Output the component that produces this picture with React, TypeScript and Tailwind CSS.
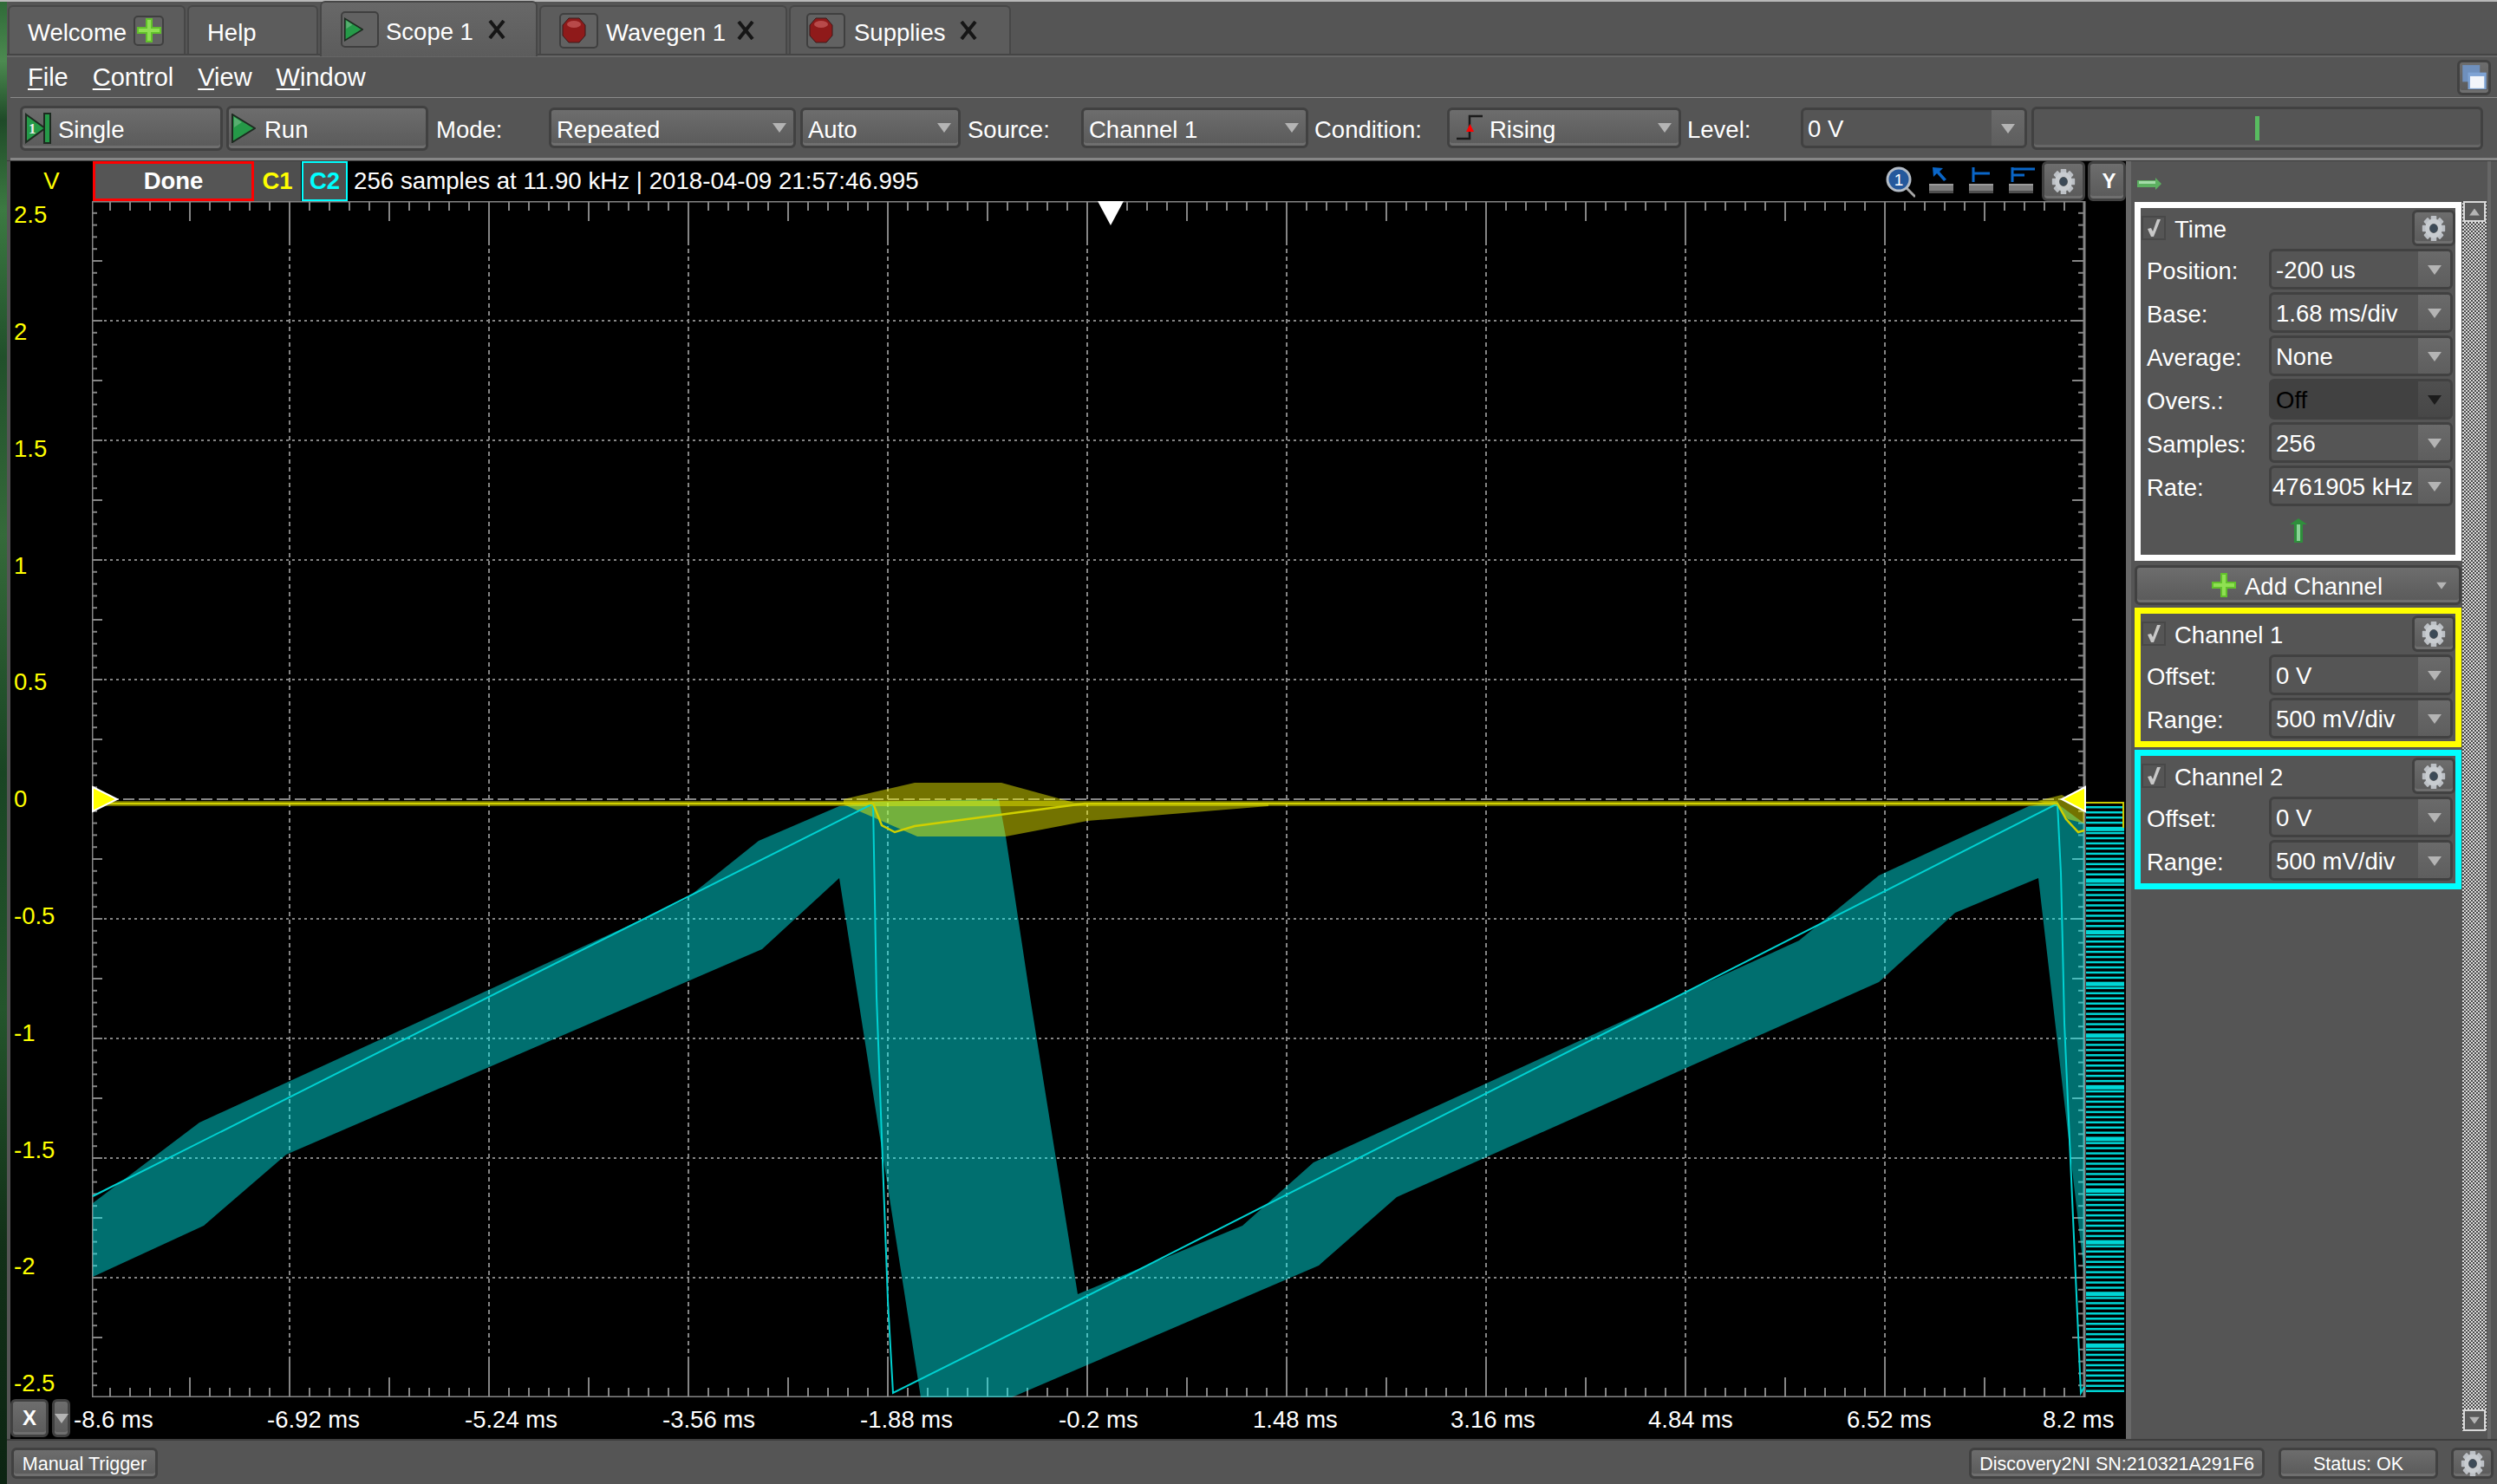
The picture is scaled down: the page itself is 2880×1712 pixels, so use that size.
import type { ReactNode } from "react";

// --- Shared styles ---
const raised =
  "rounded-[6px] border-[3px] border-[#414141] bg-linear-to-b from-[#6d6d6d] to-[#5a5a5a] shadow-[inset_0_-3px_0_#6f6f6f]";

// --- Small icons ---
const Arrow = ({ dark = false }: { dark?: boolean }) => (
  <svg width="16" height="11" viewBox="0 0 16 11" className="shrink-0">
    <polygon points="0,0 16,0 8,11" fill={dark ? "#1c1c1c" : "#b4b4b4"} />
  </svg>
);

const Gear = () => (
  <svg width="28" height="31" viewBox="0 0 34 34" preserveAspectRatio="none">
    {[0, 45, 90, 135, 180, 225, 270, 315].map((a) => (
      <rect key={a} x="13" y="1" width="8" height="9" rx="1" fill="#bcc0c5" transform={`rotate(${a} 17 17)`} />
    ))}
    <circle cx="17" cy="17" r="9" fill="none" stroke="#c8ccd0" strokeWidth="6" />
    <circle cx="17" cy="17" r="5.5" fill="#3c4a57" />
  </svg>
);

const Play = ({ w = 28, h = 34 }: { w?: number; h?: number }) => (
  <svg width={w} height={h} viewBox="0 0 28 34" className="shrink-0">
    <polygon points="1,1 27,17 1,33" fill="#259a48" stroke="#1d2a20" strokeWidth="2" />
    <polygon points="3,4 12,10 3,16" fill="#7bbd8c" opacity="0.6" />
  </svg>
);

const Stop = () => (
  <svg width="30" height="30" viewBox="0 0 30 30">
    <polygon points="9,1 21,1 28,9 28,21 21,29 9,29 2,21 2,9" fill="#8f1a1a" stroke="#3a1a1a" strokeWidth="1" />
    <ellipse cx="15" cy="8" rx="8" ry="4" fill="#c96060" opacity="0.7" />
  </svg>
);

const Close = () => (
  <svg width="24" height="22" viewBox="0 0 24 22" className="shrink-0">
    <path d="M4 1 L20 21 M20 1 L4 21" stroke="#161616" strokeWidth="4" />
  </svg>
);

const Plus = ({ size = 28 }: { size?: number }) => (
  <svg width={size} height={size} viewBox="0 0 28 28" className="shrink-0">
    <path d="M10 0 H18 V10 H28 V18 H18 V28 H10 V18 H0 V10 H10 Z" fill="#62c02c" />
    <path d="M12 2 H16 V12 H26 V16 H16 V26 H12 V16 H2 V12 H12 Z" fill="#8fe052" />
  </svg>
);

const Check = () => (
  <svg width="16" height="22" viewBox="0 0 16 22">
    <polygon points="1,12 5,11 7,15 12,1 16,1 8,21 5,21" fill="#c8c8c8" />
  </svg>
);

const SingleIcon = () => (
  <svg width="30" height="36" viewBox="0 0 30 36" className="shrink-0">
    <polygon points="1,2 23,18 1,34" fill="#259a48" stroke="#1d2a20" strokeWidth="2" />
    <rect x="22" y="1" width="7" height="34" fill="#259a48" stroke="#1d2a20" strokeWidth="2" />
    <text x="4" y="24" fontSize="17" fontWeight="700" fill="#eee" fontFamily="Liberation Serif, serif">1</text>
  </svg>
);

const RisingIcon = () => (
  <svg width="34" height="36" viewBox="0 0 34 36" className="shrink-0">
    <path d="M2 30 H17 V4 H32" fill="none" stroke="#1b1b1b" strokeWidth="2.5" />
    <polygon points="17.5,13 22,22 13,22" fill="#ff0000" />
  </svg>
);

const GreenArrowUp = () => (
  <svg width="20" height="28" viewBox="0 0 20 28">
    <polygon points="10,0 20,7 15,7 15,28 5,28 5,7 0,7" fill="#2f8f3c" />
    <rect x="8" y="7" width="4" height="19" fill="#8ad496" />
  </svg>
);

const GreenArrowRight = () => (
  <svg width="28" height="14" viewBox="0 0 28 14">
    <polygon points="0,3 21,3 21,0 28,7 21,14 21,11 0,11" fill="#5cb060" />
    <rect x="2" y="4" width="19" height="3" fill="#a4dca8" />
  </svg>
);

const Magnifier = () => (
  <svg width="44" height="40" viewBox="0 0 44 40" className="shrink-0">
    <line x1="34" y1="28" x2="44" y2="38" stroke="#a6a6a6" strokeWidth="3" />
    <circle cx="25" cy="18" r="13" fill="#24589c" stroke="#b4bcc6" strokeWidth="3" />
    <text x="25" y="25" textAnchor="middle" fontSize="19" fill="#fff" fontFamily="Liberation Sans, sans-serif">1</text>
  </svg>
);

const AlignIcon = ({ kind }: { kind: "arrow" | "one" | "two" }) => (
  <svg width="30" height="36" viewBox="0 0 30 36" className="shrink-0">
    {kind === "arrow" && <path d="M4 2 L5 13 L9 9 L17 18 L20 16 L12 7 L16 3 Z" fill="#0a66c8" />}
    {kind === "one" && <path d="M5 2 V19 M5 9 H24" stroke="#0a66c8" strokeWidth="3" fill="none" />}
    {kind === "two" && <path d="M4 2 V19 M4 4 H30 M4 11 H18" stroke="#0a66c8" strokeWidth="3" fill="none" />}
    <rect x="0" y="21" width="28" height="11" fill="#7c7c7c" />
    <rect x="0" y="21" width="28" height="2" fill="#9a9a9a" />
    <rect x="0" y="29" width="28" height="3" fill="#4e4e4e" />
  </svg>
);

const WindowIcon = () => (
  <svg width="30" height="30" viewBox="0 0 24 28" preserveAspectRatio="none">
    <rect x="1" y="1" width="16" height="18" fill="#6f90bd" />
    <rect x="6" y="9" width="17" height="18" fill="#7ea3d4" />
    <rect x="8" y="13" width="13" height="13" fill="#f2f5fa" />
  </svg>
);

// --- Toolbar widgets ---
const Combo = ({ width, icon, children }: { width: string; icon?: ReactNode; children: ReactNode }) => (
  <div className={`${width} ${raised} h-[47px] flex items-center pl-[6px] pr-[8px] shrink-0`}>
    {icon}
    <span className="flex-1 whitespace-nowrap translate-y-[2px]">{children}</span>
    <Arrow />
  </div>
);

const Field = ({ text, disabled = false, tight = false }: { text: string; disabled?: boolean; tight?: boolean }) => (
  <div
    className={`w-[212px] h-[47px] rounded-[6px] border-[3px] border-[#414141] flex items-stretch overflow-hidden ${
      disabled ? "bg-[#414141] text-black" : "bg-[#555555]"
    }`}
  >
    <span className={`w-[169px] whitespace-nowrap leading-[43px] ${tight ? "pl-[1px]" : "pl-[5px]"}`}>{text}</span>
    <span
      className={`flex-1 flex items-center justify-center pt-[2px] bg-linear-to-b ${
        disabled ? "from-[#4f4f4f] to-[#474747]" : "from-[#6a6a6a] to-[#5e5e5e]"
      }`}
    >
      <Arrow dark={disabled} />
    </span>
  </div>
);

const Section = ({
  border,
  title,
  rows,
  children,
}: {
  border: string;
  title: string;
  rows: { label: string; value: string; disabled?: boolean; tight?: boolean }[];
  children?: ReactNode;
}) => (
  <div className={`w-[377px] border-[7px] ${border} bg-[#555555] pt-[2px] flex flex-col`}>
    <div className="h-[42px] flex items-center">
      <div className="ml-[1px] w-[28px] h-[28px] border-[2px] border-[#484848] flex items-center justify-center">
        <Check />
      </div>
      <span className="ml-[10px] flex-1 translate-y-[2px]">{title}</span>
      <div className={`${raised} w-[50px] h-[42px] flex items-center justify-center`}>
        <Gear />
      </div>
    </div>
    <div className="mt-[3px] flex flex-col gap-[3px] pr-[3px]">
      {rows.map((r) => (
        <div key={r.label} className="flex items-center justify-between pl-[7px]">
          <span className="translate-y-[2px]">{r.label}</span>
          <Field text={r.value} disabled={r.disabled} tight={r.tight} />
        </div>
      ))}
    </div>
    {children ?? <div className="h-[3px]" />}
  </div>
);

// --- Scope chart ---
const GRID = "#858585";
const xs = [334, 564, 794, 1024, 1254, 1484, 1714, 1944, 2174];
const ys = [370, 508, 646, 784, 922, 1060, 1198, 1336, 1474];

const ticksX = Array.from({ length: 100 }, (_, i) => 104 + 23 * i).filter((x) => x > 110 && x < 2402);
const ticksY = Array.from({ length: 100 }, (_, i) => 232 + 13.8 * i).filter((y) => y > 236 && y < 1608);
const bars = Array.from({ length: 114 }, (_, i) => i);

const ScopeChart = () => (
  <svg width="2346" height="1380" viewBox="106 232 2346 1380" className="block shrink-0">
    {/* grid */}
    {xs.map((x) => (
      <g key={x} stroke={GRID} strokeWidth="2">
        <line x1={x} y1={278} x2={x} y2={1566} strokeDasharray="5 4" />
        <line x1={x} y1={232} x2={x} y2={278} />
        <line x1={x} y1={1566} x2={x} y2={1612} />
      </g>
    ))}
    {ys.map((y) => (
      <line key={y} x1={106} y1={y} x2={2404} y2={y} stroke={GRID} strokeWidth="2" strokeDasharray={y === 922 ? "13 5" : "3 4"} />
    ))}
    {ticksX.map((x, i) => {
      const mid = (x - 104) % 115 === 0;
      return (
        <g key={i} stroke={GRID} strokeWidth="2">
          <line x1={x} y1={232} x2={x} y2={mid ? 255 : 243} />
          <line x1={x} y1={1612} x2={x} y2={mid ? 1589 : 1601} />
        </g>
      );
    })}
    {ticksY.map((y, i) => {
      const mid = (i + 1) % 5 === 0;
      return (
        <g key={i} stroke={GRID} strokeWidth="2">
          <line x1={106} y1={y} x2={mid ? 118 : 112} y2={y} />
          <line x1={2404} y1={y} x2={mid ? 2390 : 2397} y2={y} />
        </g>
      );
    })}
    <path d="M106 1612 V232 H2404 V1612 Z" fill="none" stroke={GRID} strokeWidth="3" />

    {/* channel 2 band */}
    <polygon
      fill="#00ffff"
      fillOpacity="0.435"
      points="107,1388 230,1295 790,1038 875,970 968,930 1007,925 1152,922 1160,965 1188,1150 1243,1493 1433,1414 1515,1341 2075,1085 2167,1010 2340,930 2370,925 2404,950 2404,1470 2351,1013 2255,1053 2167,1133 1611,1381 1521,1460 1167,1612 1062,1612 968,1013 879,1095 330,1332 235,1414 107,1473"
    />
    {/* channel 1 band */}
    <polygon
      fill="#ffff00"
      fillOpacity="0.45"
      points="973,922 1055,903 1155,903 1239,926 1463,927 1463,930 1254,947 1160,965 1058,965 973,928"
    />
    <polygon fill="#ffff00" fillOpacity="0.45" points="2350,924 2378,917 2404,930 2404,950 2385,945 2372,930" />
    <line x1="107" y1="927" x2="2373" y2="927" stroke="#ffff00" strokeOpacity="0.4" strokeWidth="6" />

    {/* traces */}
    <polyline
      fill="none"
      stroke="#00d2d2"
      strokeWidth="2"
      points="107,1380 1007,927 1011,1150 1024,1500 1030,1607 1244,1500 2373,927 2377,1007 2379,1090 2381,1180 2400,1607 2404,1600"
    />
    <polyline
      fill="none"
      stroke="#d0d000"
      strokeWidth="2.5"
      points="107,927 1007,927 1017,952 1032,960 1055,953 1251,927 2373,927 2383,945 2397,960 2404,958"
    />

    {/* right edge overflow bars */}
    {bars.map((i) => (
      <rect key={i} x={2406} y={930 + i * 5.96} width={44} height={i % 10 === 4 ? 5 : 2.5} fill="#00d6d6" />
    ))}
    <polyline points="2406,926 2449,926 2449,955" fill="none" stroke="#c8c800" strokeWidth="2" />

    {/* markers */}
    <polygon points="107,908 135,922 107,936" fill="#ffff00" stroke="#fff" strokeWidth="2" />
    <polygon points="2405,908 2378,922 2405,936" fill="#ffff00" stroke="#fff" strokeWidth="2" />
    <polygon points="1266,232 1296,232 1281,260" fill="#fff" />
  </svg>
);

const yLabels = ["2.5", "2", "1.5", "1", "0.5", "0", "-0.5", "-1", "-1.5", "-2", "-2.5"];
const xLabels = ["-8.6 ms", "-6.92 ms", "-5.24 ms", "-3.56 ms", "-1.88 ms", "-0.2 ms", "1.48 ms", "3.16 ms", "4.84 ms", "6.52 ms", "8.2 ms"];

// --- Main ---
export default function App() {
  return (
    <div className="w-[2880px] h-[1712px] overflow-hidden flex flex-col bg-[#555555] text-white text-[27.5px] leading-none font-['Liberation_Sans',Arial,sans-serif]">
      <div className="h-[2px] bg-[#b8b8b8] shrink-0" />
      <div className="flex-1 flex min-h-0">
        {/* desktop sliver behind the window */}
        <div className="w-[8px] shrink-0 bg-[linear-gradient(180deg,#2f6a38_0%,#4c8a50_4%,#1f4a28_8%,#3c7a42_14%,#21502b_24%,#356a3a_36%,#1a4524_52%,#24552c_68%,#123018_84%,#0c2412_100%)]" />

        <div className="flex-1 flex flex-col min-w-0">
          {/* Tabs */}
          <div className="h-[62px] shrink-0 flex items-end pl-[1px] gap-[2px] border-b-[2px] border-[#454545]">
            <div className="w-[205px] h-[56px] rounded-t-[6px] border-[2px] border-b-0 border-[#474747] bg-[#5c5c5c] flex items-center pl-[21px]">
              <span className="translate-y-[3px]">Welcome</span>
              <span className="ml-[8px] w-[35px] h-[35px] rounded-[5px] border-[2px] border-[#3f3f3f] bg-[#626262] flex items-center justify-center">
                <Plus />
              </span>
            </div>
            <div className="w-[151px] h-[56px] rounded-t-[6px] border-[2px] border-b-0 border-[#474747] bg-[#5c5c5c] flex items-center pl-[21px]">
              <span className="translate-y-[3px]">Help</span>
            </div>
            <div className="w-[251px] h-[64px] mb-[-3px] z-10 rounded-t-[6px] border-[2px] border-b-0 border-[#474747] bg-linear-to-b from-[#686868] to-[#5c5c5c] flex items-center pl-[22px]">
              <span className="w-[44px] h-[42px] rounded-[5px] border-[2px] border-[#3f3f3f] bg-[#626262] flex items-center pl-[2px]">
                <Play w={22} h={28} />
              </span>
              <span className="ml-[8px] translate-y-[3px]">Scope 1</span>
              <span className="ml-[15px]">
                <Close />
              </span>
            </div>
            <div className="w-[286px] h-[56px] rounded-t-[6px] border-[2px] border-b-0 border-[#474747] bg-[#5c5c5c] flex items-center pl-[21px]">
              <span className="w-[45px] h-[41px] rounded-[5px] border-[2px] border-[#3f3f3f] bg-[#626262] flex items-center">
                <Stop />
              </span>
              <span className="ml-[9px] translate-y-[3px]">Wavegen 1</span>
              <span className="ml-[11px]">
                <Close />
              </span>
            </div>
            <div className="w-[256px] h-[56px] rounded-t-[6px] border-[2px] border-b-0 border-[#474747] bg-[#5c5c5c] flex items-center pl-[18px]">
              <span className="w-[45px] h-[41px] rounded-[5px] border-[2px] border-[#3f3f3f] bg-[#626262] flex items-center">
                <Stop />
              </span>
              <span className="ml-[10px] translate-y-[3px]">Supplies</span>
              <span className="ml-[14px]">
                <Close />
              </span>
            </div>
          </div>

          {/* Menu */}
          <div className="h-[48px] shrink-0 flex items-center pl-[24px] pr-[7px] gap-[28px] text-[29px] border-t-[2px] border-[#666666]">
            <span>
              <span className="underline underline-offset-[3px]">F</span>ile
            </span>
            <span>
              <span className="underline underline-offset-[3px]">C</span>ontrol
            </span>
            <span>
              <span className="underline underline-offset-[3px]">V</span>iew
            </span>
            <span>
              <span className="underline underline-offset-[3px]">W</span>indow
            </span>
            <div className={`ml-auto w-[39px] h-[41px] ${raised} flex items-center justify-center`}>
              <WindowIcon />
            </div>
          </div>

          {/* Toolbar */}
          <div className="h-[73px] shrink-0 ml-[4px] border-t border-[#8a8a8a] border-b-[3px] border-b-[#868686] flex items-center pl-[11px]">
            <div className={`w-[234px] h-[52px] ${raised} flex items-center pl-[3px] gap-[8px] shrink-0`}>
              <SingleIcon />
              <span className="translate-y-[2px]">Single</span>
            </div>
            <div className={`ml-[4px] w-[233px] h-[52px] ${raised} flex items-center pl-[3px] gap-[10px] shrink-0`}>
              <Play />
              <span className="translate-y-[2px]">Run</span>
            </div>
            <span className="ml-[9px] w-[130px] shrink-0 translate-y-[2px]">Mode:</span>
            <Combo width="w-[285px]">Repeated</Combo>
            <span className="w-[5px] shrink-0" />
            <Combo width="w-[185px]">Auto</Combo>
            <span className="ml-[8px] w-[131px] shrink-0 translate-y-[2px]">Source:</span>
            <Combo width="w-[262px]">Channel 1</Combo>
            <span className="ml-[7px] w-[153px] shrink-0 translate-y-[2px]">Condition:</span>
            <Combo width="w-[270px]" icon={<RisingIcon />}>
              <span className="ml-[6px]">Rising</span>
            </Combo>
            <span className="ml-[7px] w-[131px] shrink-0 translate-y-[2px]">Level:</span>
            <div className="w-[261px] h-[47px] shrink-0 rounded-[6px] border-[3px] border-[#414141] bg-[#555555] flex items-stretch overflow-hidden">
              <span className="flex-1 pl-[5px] leading-[43px]">0 V</span>
              <span className="w-[38px] flex items-center justify-center pt-[2px] bg-linear-to-b from-[#6a6a6a] to-[#5e5e5e]">
                <Arrow />
              </span>
            </div>
            <div className="ml-[5px] w-[521px] h-[50px] shrink-0 rounded-[6px] border-[3px] border-[#414141] bg-[#555555] shadow-[inset_0_-3px_0_#666666] flex items-center justify-center">
              <span className="w-[5px] h-[28px] bg-[#58bc60]" />
            </div>
          </div>

          {/* Workspace */}
          <div className="flex-1 flex min-h-0 border-t border-[#3c3c3c]">
            {/* Plot */}
            <div className="ml-[4px] w-[2440px] shrink-0 bg-black flex flex-col">
              <div className="h-[46px] shrink-0 flex items-stretch">
                <div className="w-[95px] flex items-center justify-center text-[#ffff00]">V</div>
                <div className="w-[186px] border-[3px] border-[#ff0000] bg-[#555555] flex items-center justify-center font-bold">
                  Done
                </div>
                <div className="w-[54px] bg-[#4e4e4e] flex items-center justify-center font-bold text-[#ffff00]">C1</div>
                <div className="ml-[1px] w-[53px] border-[2px] border-[#00ffff] bg-[#4e4e4e] flex items-center justify-center font-bold text-[#00ffff]">
                  C2
                </div>
                <div className="ml-[7px] flex-1 flex items-center whitespace-nowrap text-[27.7px]">
                  256 samples at 11.90 kHz | 2018-04-09 21:57:46.995
                </div>
                <div className="flex items-center gap-[16px]">
                  <Magnifier />
                  <AlignIcon kind="arrow" />
                  <AlignIcon kind="one" />
                  <AlignIcon kind="two" />
                </div>
                <div className={`ml-[8px] w-[50px] ${raised} flex items-center justify-center`}>
                  <Gear />
                </div>
                <div className={`ml-[3px] w-[44px] ${raised} flex items-center justify-center pl-[5px] font-bold text-[24px]`}>Y</div>
              </div>

              <div className="h-[1380px] shrink-0 flex">
                <div className="w-[94px] py-[2px] pl-[4px] flex flex-col justify-between text-[#ffff00]">
                  {yLabels.map((l) => (
                    <span key={l} className="h-[28px] flex items-center">
                      {l}
                    </span>
                  ))}
                </div>
                <ScopeChart />
              </div>

              <div className="flex-1 flex items-center">
                <div className={`w-[44px] h-[44px] ${raised} flex items-center justify-center font-bold text-[24px]`}>X</div>
                <div className={`ml-[4px] w-[21px] h-[44px] ${raised} flex items-center justify-center`}>
                  <Arrow />
                </div>
                <div className="ml-[4px] flex-1 grid grid-cols-[223px_228px_228px_228px_229px_224px_228px_228px_229px_226px_1fr] whitespace-nowrap translate-y-[2px]">
                  {xLabels.map((l) => (
                    <span key={l}>{l}</span>
                  ))}
                </div>
              </div>
            </div>

            {/* Side panel */}
            <div className="flex-1 flex border-l-[6px] border-[#686868] pl-[4px]">
              <div className="w-[378px] shrink-0 flex flex-col">
                <div className="h-[47px] flex items-center pl-[3px] pt-[4px]">
                  <GreenArrowRight />
                </div>
                <Section
                  border="border-white"
                  title="Time"
                  rows={[
                    { label: "Position:", value: "-200 us" },
                    { label: "Base:", value: "1.68 ms/div" },
                    { label: "Average:", value: "None" },
                    { label: "Overs.:", value: "Off", disabled: true },
                    { label: "Samples:", value: "256" },
                    { label: "Rate:", value: "4761905 kHz", tight: true },
                  ]}
                >
                  <div className="h-[56px] flex items-center justify-center">
                    <GreenArrowUp />
                  </div>
                </Section>
                <div className={`mt-[5px] w-[377px] h-[46px] ${raised} flex items-center relative`}>
                  <span className="ml-[86px]">
                    <Plus />
                  </span>
                  <span className="ml-[10px] translate-y-[2px]">Add Channel</span>
                  <span className="ml-auto mr-[12px] scale-75">
                    <Arrow />
                  </span>
                </div>
                <div className="h-[3px] shrink-0" />
                <Section
                  border="border-[#ffff00]"
                  title="Channel 1"
                  rows={[
                    { label: "Offset:", value: "0 V" },
                    { label: "Range:", value: "500 mV/div" },
                  ]}
                />
                <div className="h-[3px] shrink-0" />
                <Section
                  border="border-[#00ffff]"
                  title="Channel 2"
                  rows={[
                    { label: "Offset:", value: "0 V" },
                    { label: "Range:", value: "500 mV/div" },
                  ]}
                />
              </div>

              {/* Scrollbar */}
              <div className="w-[28px] shrink-0 mt-[46px] mb-[9px] flex flex-col items-center bg-[repeating-conic-gradient(#dcdcdc_0_25%,#4a4a4a_0_50%)] bg-size-[4px_4px]">
                <div className="w-[26px] h-[24px] bg-[#5a5a5a] border-[2px] border-[#d8d8d8] flex items-center justify-center">
                  <span className="rotate-180 scale-75 flex">
                    <Arrow />
                  </span>
                </div>
                <div className="mt-auto w-[26px] h-[25px] bg-[#5a5a5a] border-[2px] border-[#d8d8d8] flex items-center justify-center">
                  <span className="scale-75 flex">
                    <Arrow />
                  </span>
                </div>
              </div>
              <div className="ml-[1px] w-[4px] bg-[#666666]" />
            </div>
          </div>

          {/* Status bar */}
          <div className="h-[52px] shrink-0 border-t-[2px] border-[#3e3e3e] flex items-center pt-[2px] text-[21.5px]">
            <div className={`ml-[5px] w-[169px] h-[36px] ${raised} flex items-center justify-center`}>
              <span className="translate-y-[2px]">Manual Trigger</span>
            </div>
            <div className={`ml-auto w-[341px] h-[36px] ${raised} flex items-center justify-center`}>
              <span className="translate-y-[2px]">Discovery2NI SN:210321A291F6</span>
            </div>
            <div className={`ml-[16px] w-[184px] h-[36px] ${raised} flex items-center justify-center`}>
              <span className="translate-y-[2px]">Status: OK</span>
            </div>
            <div className={`ml-[15px] mr-[4px] w-[49px] h-[36px] ${raised} flex items-center justify-center`}>
              <Gear />
            </div>
          </div>
        </div>
      </div>
    </div>
  );
}
